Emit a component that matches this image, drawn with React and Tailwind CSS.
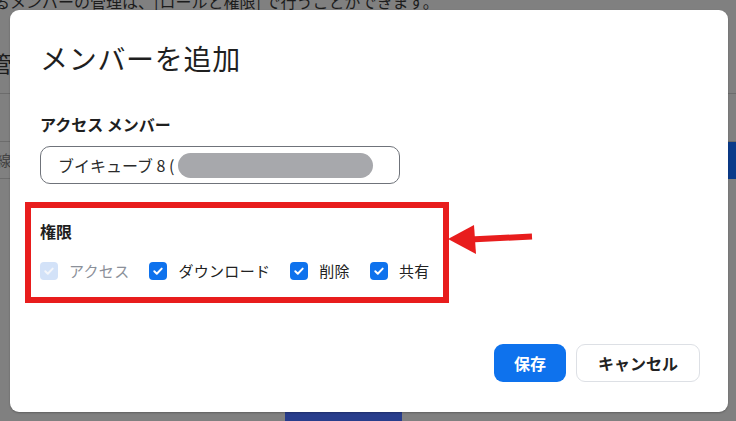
import React from "react";

const font = { fontFamily: '"Noto Sans CJK JP", "Noto Sans", sans-serif' };

function Check({ disabled }) {
  return (
    <span
      className={
        "flex h-[18px] w-[18px] shrink-0 items-center justify-center rounded-[4px] " +
        (disabled ? "bg-[#d3e2f8]" : "bg-[#0e72ed]")
      }
    >
      <svg width="12" height="12" viewBox="0 0 12 12" fill="none">
        <path
          d="M2.3 6.3 L4.8 8.7 L9.7 3.6"
          stroke={disabled ? "#f4f6fa" : "#ffffff"}
          strokeWidth="2"
          strokeLinecap="round"
          strokeLinejoin="round"
        />
      </svg>
    </span>
  );
}

function Item({ label, disabled }) {
  return (
    <label className="flex items-center gap-[11px]">
      <Check disabled={disabled} />
      <span
        className={
          "text-[15px] leading-[24px] tracking-[0.3px] " +
          (disabled ? "text-[#8b9099]" : "text-[#222]")
        }
      >
        {label}
      </span>
    </label>
  );
}

export default function App() {
  return (
    <div
      className="relative h-[421px] w-[736px] overflow-hidden bg-[#808080]"
      style={font}
    >
      {/* background page (dimmed) */}
      <div className="flex flex-col">
        <div className="-mt-[11px] ml-[-6px] whitespace-nowrap text-[16px] leading-[24px] text-[#1c1c1c]">
          るメンバーの管理は、[ロールと権限] で行うことができます。
        </div>
        <div className="mt-[33px] h-[48px] border-b border-[#6c6c6c]">
          <span className="ml-[-10px] text-[22px] leading-[32px] text-[#1c1c1c]">
            管理
          </span>
        </div>
        <div className="mt-[47px] flex h-[38px] items-center justify-between border-y border-[#6c6c6c]">
          <span className="ml-[-4px] text-[15px] text-[#444]">線</span>
          <div className="flex h-[37px] w-[40px] items-center bg-[#0b3b8a] pl-[4px] text-[14px] text-[#b8c2d8]">
            ✕
          </div>
        </div>
        <div className="mt-[233px] ml-[285px] h-[12px] w-[117px] bg-[#283d8c]" />
      </div>

      {/* modal */}
      <div className="absolute left-[10px] top-[10px] flex h-[402px] w-[718px] flex-col rounded-[9px] bg-white pl-[30px] pr-[28px] pt-[28px] shadow-[0_1px_2px_rgba(0,0,0,0.25)]">
        <h2 className="text-[28px] font-normal leading-[40px] tracking-[0.7px] text-[#1f1f1f]">
          メンバーを追加
        </h2>
        <div className="mt-[34px] text-[16px] font-bold leading-[24px] text-[#1f1f1f]">
          アクセス メンバー
        </div>
        <div className="mt-[10px] flex h-[38px] w-[360px] items-center rounded-[10px] border border-[#6f737a] pl-[17px] text-[16px] text-[#2a2a2a]">
          <span>ブイキューブ 8 (</span>
          <span className="ml-[3px] h-[25px] w-[195px] rounded-full bg-[#a7a8ac]" />
        </div>

        <div className="mt-[35px] text-[16px] font-bold leading-[24px] text-[#1f1f1f]">
          権限
        </div>
        <div className="mt-[16px] flex items-center gap-[20px]">
          <Item label="アクセス" disabled />
          <Item label="ダウンロード" />
          <Item label="削除" />
          <Item label="共有" />
        </div>

        <div className="mt-auto mb-[30px] flex justify-end gap-[10px]">
          <button className="h-[38px] rounded-[9px] bg-[#0e72ed] px-[20px] text-[16px] font-bold text-white">
            保存
          </button>
          <button className="h-[38px] rounded-[9px] border border-[#dde0e5] bg-white px-[21px] text-[16px] font-bold text-[#222]">
            キャンセル
          </button>
        </div>
      </div>

      {/* annotation: red box */}
      <div className="pointer-events-none absolute left-[25px] top-[202px] h-[101px] w-[424px] border-[6px] border-[#e81d1d]" />

      {/* annotation: arrow */}
      <svg
        className="pointer-events-none absolute left-0 top-0"
        width="736"
        height="421"
        viewBox="0 0 736 421"
      >
        <path d="M470 239.5 L532 236.5" stroke="#e81d1d" strokeWidth="6" />
        <polygon points="448,239 474,225 476,254" fill="#e81d1d" />
      </svg>
    </div>
  );
}
